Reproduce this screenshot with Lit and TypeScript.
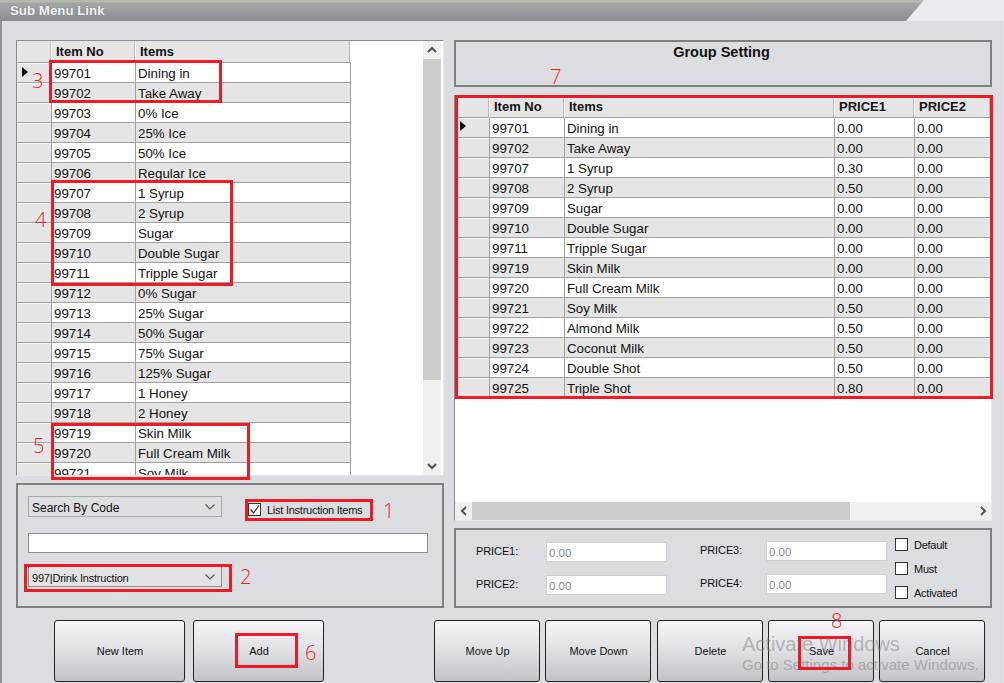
import { LitElement, html, css, svg } from "lit";
import { customElement } from "lit/decorators.js";

const LEFT: [string, string][] = [
  ["99701","Dining in"],["99702","Take Away"],["99703","0% Ice"],["99704","25% Ice"],["99705","50% Ice"],["99706","Regular Ice"],
  ["99707","1 Syrup"],["99708","2 Syrup"],["99709","Sugar"],["99710","Double Sugar"],["99711","Tripple Sugar"],["99712","0% Sugar"],
  ["99713","25% Sugar"],["99714","50% Sugar"],["99715","75% Sugar"],["99716","125% Sugar"],["99717","1 Honey"],["99718","2 Honey"],
  ["99719","Skin Milk"],["99720","Full Cream Milk"],["99721","Soy Milk"],
];
const RIGHT: string[][] = [
  ["99701","Dining in","0.00"],["99702","Take Away","0.00"],["99707","1 Syrup","0.30"],["99708","2 Syrup","0.50"],["99709","Sugar","0.00"],
  ["99710","Double Sugar","0.00"],["99711","Tripple Sugar","0.00"],["99719","Skin Milk","0.00"],["99720","Full Cream Milk","0.00"],
  ["99721","Soy Milk","0.50"],["99722","Almond Milk","0.50"],["99723","Coconut Milk","0.50"],["99724","Double Shot","0.50"],["99725","Triple Shot","0.80"],
];
const BOXES = [
  [49,60,173,43],[51,180,182,106],[51,423,199,57],[245,499,128,22],[24,564,208,28],[235,633,63,35],[455,95,538,304],[798,636,53,34],
];
const NUMS: [string, number, number][] = [
  ["3",32,70],["4",35,209],["5",33,435],["1",383,500],["2",240,566],["6",305,642],["7",550,66],["8",831,610],
];
const chev = (d: string) => html`<svg class="chev" width="10" height="10" viewBox="0 0 10 10"><path d=${d} fill="none" stroke="#555" stroke-width="2"/></svg>`;
const drop = html`<svg width="10" height="6" viewBox="0 0 10 6"><path d="M.5 .5 5 5 9.5 .5" fill="none" stroke="#555" stroke-width="1.1"/></svg>`;
const arrow = svg`<svg width="6" height="10" viewBox="0 0 6 10"><path d="M0 0 6 5 0 10z" fill="#000"/></svg>`;

@customElement("app-root")
export class AppRoot extends LitElement {
  static styles = css`
    :host { display: block; position: relative; width: 1004px; height: 683px; overflow: hidden; background: #ecebf0;
      font: 11px "Liberation Sans", Arial, sans-serif; color: #111; }
    .title { height: 21px; box-sizing: border-box; padding: 3px 0 0 10px; font-weight: bold; font-size: 13.3px; color: #f4f5f5;
      background: linear-gradient(#b4bab0 0, #b4bab0 2px, #a3a7a8 3px, #8a8e90 100%); clip-path: polygon(0 0, 924px 0, 906px 100%, 0 100%);
      text-shadow: 0 0 1px #666; }
    .body { height: 662px; box-sizing: border-box; background: #dcdde1; border-left: 2px solid #8f9293; border-right: 1px solid #e6e6ea;
      display: grid; grid-template-columns: 428px 538px; column-gap: 10px; grid-template-rows: 568px 1fr; padding: 19px 0 0 14px; }
    .col { display: flex; flex-direction: column; }
    .grid { background: #fff; border: 1px solid #a0a0a0; border-color: #8c8c8c #e8e8e8 #e8e8e8 #8c8c8c; position: relative; font-size: 13.3px; overflow: hidden; box-sizing: border-box; }
    .left { height: 437px; display: flex; }
    .lrows { flex: 1; height: 100%; overflow: hidden; }
    .row { display: grid; height: 20px; box-sizing: border-box; }
    .row.alt > .c { background: #e5e5e5; }
    .c { height: 20px; box-sizing: border-box; line-height: 21px; border-right: 1px solid #a0a0a0; border-bottom: 1px solid #a0a0a0; padding-left: 2px; white-space: nowrap; background: #fff; }
    .row .rh, .head > div { background: #e6e6e6 !important; }
    .rh { box-shadow: inset 0 1px 0 #f8f8f8; padding: 0; display: flex; align-items: center; }
    .rh svg { margin: -2px 0 0 5px; }
    .head { height: 22px; font-weight: bold; font-size: 13px; }
    .head > div { height: 22px; box-sizing: border-box; line-height: 22px; padding-left: 4px; border-right: 1px solid #fff; border-bottom: 1px solid #a0a0a0; box-shadow: inset -1px 0 0 #bbb; }
    .head > .blank { background: #fff !important; border: 0; box-shadow: none; }
    .vbar { width: 18px; margin-right: 2px; background: #f0f0f0; display: flex; flex-direction: column; }
    .vbar .arrow { height: 18px; display: flex; align-items: center; justify-content: center; flex: none; }
    .vbar .thumb { height: 321px; background: #cdcdcd; }
    .vbar .track { flex: 1; }
    .panel { border: 2px solid #808080; box-sizing: border-box; }
    .filter { margin-top: 7px; height: 125px; padding: 11px 14px 0 10px; }
    .frow { display: flex; align-items: center; }
    .select { width: 194px; height: 21px; box-sizing: border-box; border: 1px solid #a9a9a9; background: #dedfe2; font-size: 12px; padding: 2px 6px 0 3px;
      display: flex; align-items: center; justify-content: space-between; }
    .select svg { margin-top: -2px; }
    .select.sel { background: #e3e3e3; border-color: #8f8f8f; margin-top: 13px; font-size: 11px; letter-spacing: -.2px; }
    .check { display: flex; align-items: center; gap: 6px; font-size: 11px; letter-spacing: -.25px; }
    .box { width: 13px; height: 13px; box-sizing: border-box; border: 1px solid #333; background: #fff; display: block; flex: none; }
    .filter .check { margin: 6px 0 0 26px; }
    .text { margin-top: 16px; width: 400px; height: 20px; box-sizing: border-box; border: 1px solid #8a8a8a; background: #fff; }
    .group { height: 47px; display: block; text-align: center; font-weight: bold; font-size: 14.5px; padding: 2px 3px 0 0; }
    .right { margin-top: 8px; height: 427px; display: flex; flex-direction: column; }
    .rrows { flex: 1; overflow: hidden; }
    .hbar { height: 18px; background: #f0f0f0; display: flex; align-items: center; }
    .hbar .arrow { width: 17px; height: 18px; display: flex; align-items: center; justify-content: center; flex: none; }
    .hbar .thumb { width: 378px; height: 18px; background: #cdcdcd; }
    .hbar .track { flex: 1; }
    .prices { margin-top: 7px; height: 80px; display: grid; grid-template-columns: 70px 121px 33px 66px 121px 1fr; grid-template-rows: 20px 20px; row-gap: 13px; padding: 12px 0 0 20px; }
    .prices label { font-size: 11px; line-height: 18px; letter-spacing: -.1px; }
    .val { height: 20px; box-sizing: border-box; border: 1px solid #d0d0d0; background: #fff; color: #7f8a99; font-size: 11.5px; line-height: 20px; padding-left: 2px; }
    .up { margin-top: -1px; }
    .checks { grid-column: 6; grid-row: 1 / span 2; margin: -4px 0 0 8px; display: flex; flex-direction: column; gap: 11px; }
    .checks .check { height: 13px; }
    .buttons { grid-column: 1 / span 2; display: flex; padding: 12px 0 0 38px; }
    button { height: 62px; box-sizing: border-box; border: 1px solid #222; border-radius: 3px; font: 11px "Liberation Sans", Arial, sans-serif; color: #111;
      background: linear-gradient(#f6f6f8, #dfe0e3 50%, #c2c3c7); padding: 0 0 0 1px; }
    .b1 { width: 131px; margin-right: 8px; } .b2 { width: 131px; margin-right: 110px; } .b3 { width: 106px; margin-right: 5px; } .b3.wide { margin-right: 6px; }
    .mark { position: absolute; border: 3px solid #ed1c24; box-sizing: border-box; pointer-events: none; }
    .num { position: absolute; color: #ed1c24; font-size: 20px; line-height: 22px; font-family: "Open Sans", "Liberation Sans", sans-serif; font-weight: 300; }
    .wm { position: absolute; left: 742px; top: 633px; color: rgba(125,125,130,.5); pointer-events: none; }
    .wm div:first-child { font-size: 20px; line-height: 22px; }
    .wm div:last-child { font-size: 15px; line-height: 20px; }
  `;

  render() {
    const lc = "35px 84px 215px 1fr";
    const rc = "35px 75px 270px 80px 1fr";
    return html`
      <div class="title">Sub Menu Link</div>
      <div class="body">
        <div class="col">
          <div class="grid left">
            <div class="lrows">
              <div class="row head" style="grid-template-columns:${lc}"><div></div><div>Item No</div><div>Items</div><div class="blank"></div></div>
              ${LEFT.map((r, i) => html`<div class="row ${i % 2 ? "alt" : ""}" style="grid-template-columns:35px 84px 215px">
                <div class="c rh">${i === 0 ? arrow : ""}</div>
                <div class="c">${r[0]}</div><div class="c">${r[1]}</div></div>`)}
            </div>
            <div class="vbar">
              <div class="arrow">${chev("M1 7 5 3 9 7")}</div><div class="thumb"></div><div class="track"></div><div class="arrow">${chev("M1 3 5 7 9 3")}</div>
            </div>
          </div>
          <div class="panel filter">
            <div class="frow">
              <div class="select">Search By Code ${drop}</div>
              <div class="check"><span class="box"><svg width="11" height="11" viewBox="0 0 11 11" style="display:block"><path d="M1.5 5.5 4.5 9 10 1.5" fill="none" stroke="#333" stroke-width="1.2"/></svg></span>List Instruction Items</div>
            </div>
            <div class="text"></div>
            <div class="select sel">997|Drink Instruction ${drop}</div>
          </div>
        </div>
        <div class="col">
          <div class="panel group">Group Setting</div>
          <div class="grid right">
            <div class="rrows">
              <div class="row head" style="grid-template-columns:${rc}"><div></div><div>Item No</div><div>Items</div><div>PRICE1</div><div>PRICE2</div></div>
              ${RIGHT.map((r, i) => html`<div class="row ${i % 2 ? "alt" : ""}" style="grid-template-columns:${rc}">
                <div class="c rh">${i === 0 ? arrow : ""}</div>
                ${[...r, "0.00"].map((v) => html`<div class="c">${v}</div>`)}</div>`)}
            </div>
            <div class="hbar">
              <div class="arrow">${chev("M7 1 3 5 7 9")}</div><div class="thumb"></div><div class="track"></div><div class="arrow">${chev("M3 1 7 5 3 9")}</div>
            </div>
          </div>
          <div class="panel prices">
            <label>PRICE1:</label><div class="val">0.00</div><span></span>
            <label class="up">PRICE3:</label><div class="val up">0.00</div>
            <div class="checks">
              <div class="check"><span class="box"></span>Default</div>
              <div class="check"><span class="box"></span>Must</div>
              <div class="check"><span class="box"></span>Activated</div>
            </div>
            <label>PRICE2:</label><div class="val">0.00</div><span></span>
            <label class="up">PRICE4:</label><div class="val up">0.00</div>
          </div>
        </div>
        <div class="buttons">
          <button class="b1">New Item</button><button class="b2">Add</button>
          <button class="b3">Move Up</button><button class="b3 wide">Move Down</button><button class="b3">Delete</button><button class="b3">Save</button><button class="b3">Cancel</button>
        </div>
      </div>
      <div class="wm"><div>Activate Windows</div><div>Go to Settings to activate Windows.</div></div>
      ${BOXES.map((b) => html`<div class="mark" style="left:${b[0]}px;top:${b[1]}px;width:${b[2]}px;height:${b[3]}px"></div>`)}
      ${NUMS.map((n) => html`<div class="num" style="left:${n[1]}px;top:${n[2]}px">${n[0]}</div>`)}
    `;
  }
}
